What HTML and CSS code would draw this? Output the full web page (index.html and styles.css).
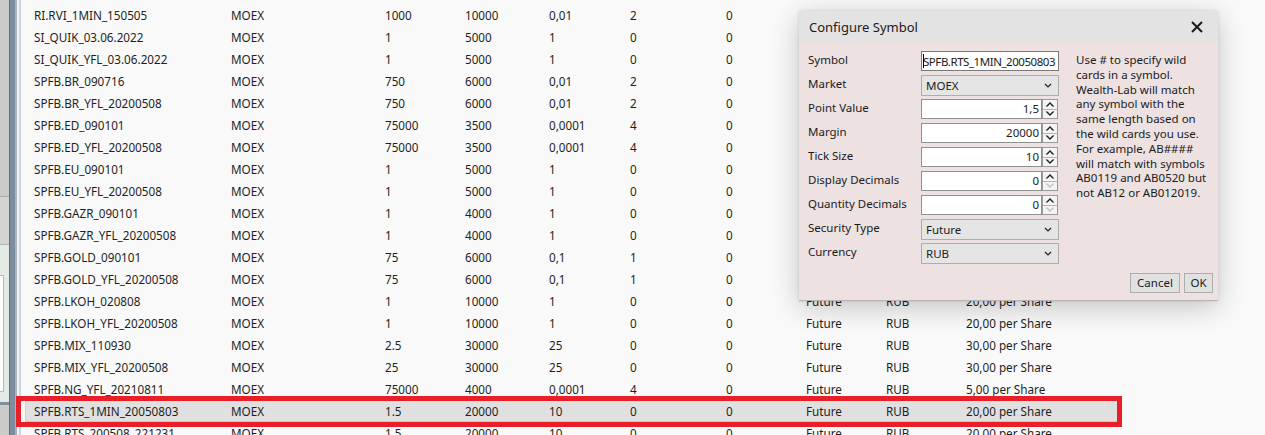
FILE: index.html
```html
<!DOCTYPE html>
<html lang="en">
<head>
<meta charset="utf-8">
<title>Configure Symbol</title>
<link rel="stylesheet" href="styles.css">
</head>
<body>
<div class="app">
  <aside class="side">
    <div class="side-a">
      <div class="sa-top"></div>
      <div class="sa-mid"></div>
      <div class="sa-panel"><div class="sa-box"></div></div>
      <div class="sa-rule"></div>
      <div class="sa-bottom"></div>
    </div>
    <div class="side-b"></div>
    <div class="side-c"></div>
    <div class="side-d"></div>
    <div class="side-e"></div>
    <div class="side-f"></div>
  </aside>
  <main class="table">
    <div class="row"><span>RI.RVI_1MIN_150505</span><span>MOEX</span><span>1000</span><span>10000</span><span>0,01</span><span>2</span><span>0</span><span></span><span></span><span></span></div>
    <div class="row"><span>SI_QUIK_03.06.2022</span><span>MOEX</span><span>1</span><span>5000</span><span>1</span><span>0</span><span>0</span><span></span><span></span><span></span></div>
    <div class="row"><span>SI_QUIK_YFL_03.06.2022</span><span>MOEX</span><span>1</span><span>5000</span><span>1</span><span>0</span><span>0</span><span></span><span></span><span></span></div>
    <div class="row"><span>SPFB.BR_090716</span><span>MOEX</span><span>750</span><span>6000</span><span>0,01</span><span>2</span><span>0</span><span></span><span></span><span></span></div>
    <div class="row"><span>SPFB.BR_YFL_20200508</span><span>MOEX</span><span>750</span><span>6000</span><span>0,01</span><span>2</span><span>0</span><span></span><span></span><span></span></div>
    <div class="row"><span>SPFB.ED_090101</span><span>MOEX</span><span>75000</span><span>3500</span><span>0,0001</span><span>4</span><span>0</span><span></span><span></span><span></span></div>
    <div class="row"><span>SPFB.ED_YFL_20200508</span><span>MOEX</span><span>75000</span><span>3500</span><span>0,0001</span><span>4</span><span>0</span><span></span><span></span><span></span></div>
    <div class="row"><span>SPFB.EU_090101</span><span>MOEX</span><span>1</span><span>5000</span><span>1</span><span>0</span><span>0</span><span></span><span></span><span></span></div>
    <div class="row"><span>SPFB.EU_YFL_20200508</span><span>MOEX</span><span>1</span><span>5000</span><span>1</span><span>0</span><span>0</span><span></span><span></span><span></span></div>
    <div class="row"><span>SPFB.GAZR_090101</span><span>MOEX</span><span>1</span><span>4000</span><span>1</span><span>0</span><span>0</span><span></span><span></span><span></span></div>
    <div class="row"><span>SPFB.GAZR_YFL_20200508</span><span>MOEX</span><span>1</span><span>4000</span><span>1</span><span>0</span><span>0</span><span></span><span></span><span></span></div>
    <div class="row"><span>SPFB.GOLD_090101</span><span>MOEX</span><span>75</span><span>6000</span><span>0,1</span><span>1</span><span>0</span><span></span><span></span><span></span></div>
    <div class="row"><span>SPFB.GOLD_YFL_20200508</span><span>MOEX</span><span>75</span><span>6000</span><span>0,1</span><span>1</span><span>0</span><span></span><span></span><span></span></div>
    <div class="row"><span>SPFB.LKOH_020808</span><span>MOEX</span><span>1</span><span>10000</span><span>1</span><span>0</span><span>0</span><span>Future</span><span>RUB</span><span>20,00 per Share</span></div>
    <div class="row"><span>SPFB.LKOH_YFL_20200508</span><span>MOEX</span><span>1</span><span>10000</span><span>1</span><span>0</span><span>0</span><span>Future</span><span>RUB</span><span>20,00 per Share</span></div>
    <div class="row"><span>SPFB.MIX_110930</span><span>MOEX</span><span>2.5</span><span>30000</span><span>25</span><span>0</span><span>0</span><span>Future</span><span>RUB</span><span>30,00 per Share</span></div>
    <div class="row"><span>SPFB.MIX_YFL_20200508</span><span>MOEX</span><span>25</span><span>30000</span><span>25</span><span>0</span><span>0</span><span>Future</span><span>RUB</span><span>30,00 per Share</span></div>
    <div class="row"><span>SPFB.NG_YFL_20210811</span><span>MOEX</span><span>75000</span><span>4000</span><span>0,0001</span><span>4</span><span>0</span><span>Future</span><span>RUB</span><span>5,00 per Share</span></div>
    <div class="row selected"><span>SPFB.RTS_1MIN_20050803</span><span>MOEX</span><span>1.5</span><span>20000</span><span>10</span><span>0</span><span>0</span><span>Future</span><span>RUB</span><span>20,00 per Share</span></div>
    <div class="row"><span>SPFB.RTS_200508_221231</span><span>MOEX</span><span>1.5</span><span>20000</span><span>10</span><span>0</span><span>0</span><span>Future</span><span>RUB</span><span>20,00 per Share</span></div>
  </main>
</div>

<div class="mark"></div>

<section class="dialog">
  <header class="dlg-title">
    <span>Configure Symbol</span>
    <svg class="close" width="14" height="14" viewBox="0 0 14 14"><path d="M2 2 L12 12 M12 2 L2 12" stroke="#1b1b1b" stroke-width="2" fill="none"/></svg>
  </header>
  <div class="dlg-body">
    <div class="dlg-main">
      <div class="form">
        <label>Symbol</label>
        <div class="text-input focused"><i class="caret"></i>SPFB.RTS_1MIN_20050803</div>

        <label>Market</label>
        <div class="select"><span>MOEX</span><svg width="8" height="5" viewBox="0 0 8 5"><path d="M1 1 L4 4 L7 1" stroke="#222" stroke-width="1.2" fill="none"/></svg></div>

        <label>Point Value</label>
        <div class="num"><div class="num-val">1,5</div><div class="spin"><div class="sp up"><svg width="10" height="6" viewBox="0 0 10 6"><path d="M0.5 5.5 L5 1 L9.5 5.5 L7.5 5.5 L5 3 L2.5 5.5 Z" fill="#222"/></svg></div><div class="sp down"><svg width="10" height="6" viewBox="0 0 10 6"><path d="M0.5 0.5 L5 5 L9.5 0.5 L7.5 0.5 L5 3 L2.5 0.5 Z" fill="#222"/></svg></div></div></div>

        <label>Margin</label>
        <div class="num"><div class="num-val">20000</div><div class="spin"><div class="sp up"><svg width="10" height="6" viewBox="0 0 10 6"><path d="M0.5 5.5 L5 1 L9.5 5.5 L7.5 5.5 L5 3 L2.5 5.5 Z" fill="#222"/></svg></div><div class="sp down"><svg width="10" height="6" viewBox="0 0 10 6"><path d="M0.5 0.5 L5 5 L9.5 0.5 L7.5 0.5 L5 3 L2.5 0.5 Z" fill="#222"/></svg></div></div></div>

        <label>Tick Size</label>
        <div class="num"><div class="num-val">10</div><div class="spin"><div class="sp up"><svg width="10" height="6" viewBox="0 0 10 6"><path d="M0.5 5.5 L5 1 L9.5 5.5 L7.5 5.5 L5 3 L2.5 5.5 Z" fill="#222"/></svg></div><div class="sp down"><svg width="10" height="6" viewBox="0 0 10 6"><path d="M0.5 0.5 L5 5 L9.5 0.5 L7.5 0.5 L5 3 L2.5 0.5 Z" fill="#222"/></svg></div></div></div>

        <label>Display Decimals</label>
        <div class="num"><div class="num-val">0</div><div class="spin"><div class="sp up"><svg width="10" height="6" viewBox="0 0 10 6"><path d="M0.5 5.5 L5 1 L9.5 5.5 L7.5 5.5 L5 3 L2.5 5.5 Z" fill="#222"/></svg></div><div class="sp down"><svg width="10" height="6" viewBox="0 0 10 6"><path d="M0.5 0.5 L5 5 L9.5 0.5 L7.5 0.5 L5 3 L2.5 0.5 Z" fill="#c4c4c4"/></svg></div></div></div>

        <label>Quantity Decimals</label>
        <div class="num"><div class="num-val">0</div><div class="spin"><div class="sp up"><svg width="10" height="6" viewBox="0 0 10 6"><path d="M0.5 5.5 L5 1 L9.5 5.5 L7.5 5.5 L5 3 L2.5 5.5 Z" fill="#222"/></svg></div><div class="sp down"><svg width="10" height="6" viewBox="0 0 10 6"><path d="M0.5 0.5 L5 5 L9.5 0.5 L7.5 0.5 L5 3 L2.5 0.5 Z" fill="#c4c4c4"/></svg></div></div></div>

        <label>Security Type</label>
        <div class="select"><span>Future</span><svg width="8" height="5" viewBox="0 0 8 5"><path d="M1 1 L4 4 L7 1" stroke="#222" stroke-width="1.2" fill="none"/></svg></div>

        <label>Currency</label>
        <div class="select"><span>RUB</span><svg width="8" height="5" viewBox="0 0 8 5"><path d="M1 1 L4 4 L7 1" stroke="#222" stroke-width="1.2" fill="none"/></svg></div>
      </div>
      <p class="help">Use # to specify wild<br>cards in a symbol.<br>Wealth-Lab will match<br>any symbol with the<br>same length based on<br>the wild cards you use.<br>For example, AB####<br>will match with symbols<br>AB0119 and AB0520 but<br>not AB12 or AB012019.</p>
    </div>
    <div class="dlg-footer">
      <button class="btn cancel">Cancel</button>
      <button class="btn ok">OK</button>
    </div>
  </div>
</section>
</body>
</html>
```
FILE: styles.css
```css
* { box-sizing: border-box; }
html, body { margin: 0; padding: 0; }
body {
  width: 1265px;
  height: 435px;
  overflow: hidden;
  background: #f9f9f9;
  font-family: "Noto Sans", "Open Sans", sans-serif;
  color: #1b1b1b;
  position: relative;
}

.app { display: flex; height: 435px; }

/* left edge of the application window */
.side { display: flex; flex: 0 0 21px; height: 100%; }
.side-a { width: 9px; display: flex; flex-direction: column; }
.sa-top { height: 197px; background: #cbcbcb; border-bottom: 1px solid #a9a9a9; }
.sa-mid { height: 48px; background: #d4d4d4; border-bottom: 1px solid #b3b3b3; }
.sa-panel { height: 157px; background: #e4ebe4; padding: 30px 5px 10px 0; }
.sa-box { height: 100%; background: #ffffff; border: 1px solid #b8b8b8; border-left: 0; }
.sa-rule { height: 3px; background: #7d8e9e; }
.sa-bottom { flex: 1; background: #cbcbcb; }
.side-b { width: 1px; background: #5f6e7c; }
.side-c { width: 5px; background: #7b8d9e; }
.side-d { width: 2px; background: #a8b3bd; }
.side-e { width: 2px; background: #f2f2f2; }
.side-f { width: 2px; background: #c8d6e4; }

/* table */
.table {
  flex: 0 0 1097px;
  padding: 4px 0 0 4px;
  font-size: 11.7px;
  color: #1e1e1e;
}
.row {
  display: grid;
  grid-template-columns: 197px 154px 80px 84px 81px 96px 80px 80px 80px 1fr;
  height: 22px;
  align-items: center;
  padding-left: 9px;
  white-space: nowrap;
}
.row.selected {
  background: #e0e0e0;
  border-top: 1px solid #c6c6c6;
  border-bottom: 1px solid #c6c6c6;
  border-left: 1px solid #d0d0d0;
  padding-left: 8px;
}

/* red annotation frame */
.mark {
  position: absolute;
  left: 16px;
  top: 396px;
  width: 1106px;
  height: 31px;
  border: 5px solid #e81f27;
}

/* dialog */
.dialog {
  position: absolute;
  left: 799px;
  top: 11px;
  width: 419px;
  height: 290px;
  display: flex;
  flex-direction: column;
  background: #ede1e1;
  border-bottom: 1px solid #b9b3b3;
  box-shadow: 0 6px 26px rgba(0, 0, 0, 0.22), 0 0 3px rgba(0, 0, 0, 0.12);
}
.dlg-title {
  height: 31px;
  flex: 0 0 31px;
  background: #e3e3e3;
  display: flex;
  align-items: center;
  justify-content: space-between;
  padding: 0 14px 0 10px;
  font-size: 13px;
  color: #1b1b1b;
}
.close { display: block; }
.dlg-body {
  flex: 1;
  display: flex;
  flex-direction: column;
  padding: 7px 5px 7px 9px;
  font-size: 11.5px;
}
.dlg-main { display: flex; gap: 17px; }
.form {
  display: grid;
  grid-template-columns: 113px 138px;
  grid-auto-rows: 24px;
  align-items: center;
}
.form label { padding-bottom: 3px; }

.text-input {
  height: 20px;
  background: #fff;
  border: 1px solid #7a7a7a;
  padding-left: 1px;
  display: flex;
  align-items: center;
  overflow: hidden;
  white-space: nowrap;
  letter-spacing: -0.45px;
}
.caret { display: inline-block; width: 1px; height: 14px; background: #000; margin-right: -1px; }

.select {
  height: 21px;
  background: #e5e5e5;
  border: 1px solid #adadad;
  display: flex;
  align-items: center;
  justify-content: space-between;
  padding: 0 6px 0 4px;
}
.select svg { display: block; }

.num { display: flex; height: 20px; }
.num-val {
  flex: 1;
  background: #fff;
  border: 1px solid #8f8f8f;
  text-align: right;
  padding-right: 2px;
  line-height: 18px;
}
.spin {
  width: 16px;
  margin-right: 1px;
  border: 1px solid #9a9a9a;
  background: #f4f4f4;
  display: flex;
  flex-direction: column;
}
.sp { flex: 1; display: flex; align-items: center; justify-content: center; }
.sp.up { border-bottom: 1px solid #b5b5b5; }
.sp svg { display: block; }

.help {
  margin: 4px 0 0 0;
  line-height: 14.8px;
  white-space: nowrap;
}

.dlg-footer {
  margin-top: auto;
  display: flex;
  justify-content: flex-end;
  gap: 4px;
}
.btn {
  height: 20px;
  font-family: inherit;
  font-size: 11.5px;
  color: #1b1b1b;
  background: #e1e1e1;
  border: 1px solid #adadad;
  padding: 0;
  line-height: 18px;
}
.btn.cancel { width: 50px; }
.btn.ok { width: 29px; }
```
